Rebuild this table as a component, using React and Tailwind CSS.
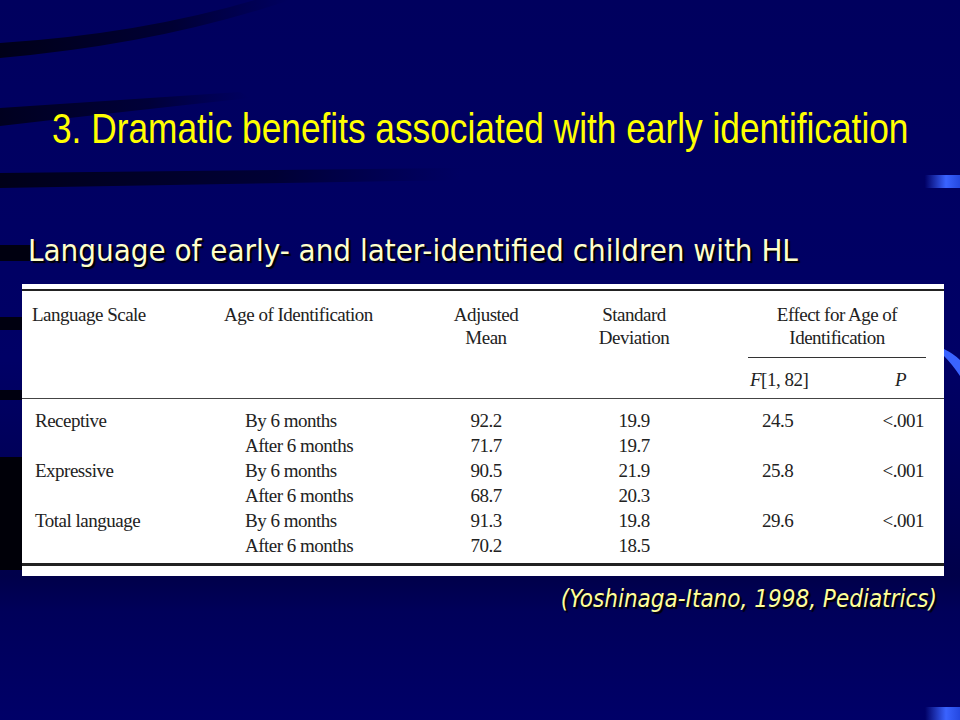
const serif = { fontFamily: '"Liberation Serif", "Times New Roman", serif' };

const rows = [
  ["Receptive", "By 6 months", "92.2", "19.9", "24.5", "<.001"],
  ["", "After 6 months", "71.7", "19.7", "", ""],
  ["Expressive", "By 6 months", "90.5", "21.9", "25.8", "<.001"],
  ["", "After 6 months", "68.7", "20.3", "", ""],
  ["Total language", "By 6 months", "91.3", "19.8", "29.6", "<.001"],
  ["", "After 6 months", "70.2", "18.5", "", ""],
];

function Backdrop() {
  return (
    <svg className="absolute inset-0" width="960" height="720" viewBox="0 0 960 720">
      <defs>
        <linearGradient id="bg" x1="0" y1="0" x2="0" y2="1">
          <stop offset="0" stopColor="#00005e" />
          <stop offset="0.5" stopColor="#000066" />
          <stop offset="0.8" stopColor="#00004a" />
          <stop offset="0.85" stopColor="#00005a" />
          <stop offset="1" stopColor="#000068" />
        </linearGradient>
        <linearGradient id="fadeR" x1="0" y1="0" x2="1" y2="0">
          <stop offset="0" stopColor="#000018" stopOpacity="1" />
          <stop offset="0.6" stopColor="#000022" stopOpacity="0.7" />
          <stop offset="1" stopColor="#000033" stopOpacity="0" />
        </linearGradient>
        <linearGradient id="glow" x1="0" y1="0" x2="1" y2="0">
          <stop offset="0" stopColor="#000066" />
          <stop offset="0.6" stopColor="#3a63ff" />
          <stop offset="1" stopColor="#2448e0" />
        </linearGradient>
      </defs>
      <rect width="960" height="720" fill="url(#bg)" />
      <path d="M0,43 Q140,34 255,0 L290,0 Q160,44 0,58 Z" fill="url(#fadeR)" />
      <path d="M0,108 Q120,100 240,92 L250,98 Q120,112 0,126 Z" fill="url(#fadeR)" opacity="0.9" />
      <path d="M0,173 L460,168 L460,180 L0,188 Z" fill="url(#fadeR)" />
      <rect x="0" y="245" width="30" height="16" fill="#000010" />
      <rect x="0" y="317" width="24" height="13" fill="#000010" />
      <rect x="0" y="390" width="24" height="10" fill="#000010" />
      <rect x="0" y="457" width="22" height="113" fill="#000008" />
      <rect x="925" y="175" width="35" height="13" fill="url(#glow)" />
      <path d="M944,349 Q954,354 960,360 L960,376 Q952,364 944,356 Z" fill="#3a63ff" />
      <rect x="925" y="707" width="35" height="13" fill="url(#glow)" />
    </svg>
  );
}

export default function App() {
  return (
    <div className="relative w-[960px] h-[720px] overflow-hidden bg-[#000066]">
      <Backdrop />

      <div className="relative flex flex-col">
        {/* TITLE */}
        <h1
          className="mt-[107px] self-center w-max text-[43px] leading-[43px] text-[#ffff00] scale-x-[0.82] origin-center whitespace-nowrap"
          style={{ fontFamily: '"Liberation Sans", Arial, sans-serif' }}
        >
          3. Dramatic benefits associated with early identification
        </h1>

        {/* SUBTITLE */}
        <p
          className="mt-[85px] ml-[28px] text-[31px] leading-[31px] text-[#ffffcc] whitespace-nowrap [text-shadow:2px_2px_1px_#000]"
          style={{ fontFamily: '"DejaVu Sans Condensed", "DejaVu Sans", sans-serif' }}
        >
          Language of early- and later-identified children with HL
        </p>

        {/* TABLE */}
        <div
          className="mt-[18px] ml-[22px] w-[922px] h-[292px] bg-white text-[19px] tracking-[-0.5px] text-[#222] pt-[5px]"
          style={serif}
        >
          <div className="border-t-2 border-[#222] pt-[12px]">
            <div className="flex leading-[23px]">
              <div className="w-[202px] pl-[10px]">Language Scale</div>
              <div className="w-[204px]">Age of Identification</div>
              <div className="w-[116px] text-center">Adjusted<br />Mean</div>
              <div className="w-[180px] text-center">Standard<br />Deviation</div>
              <div className="ml-[24px] w-[178px]">
                <div className="text-center pb-[8px] border-b border-[#333]">
                  Effect for Age of<br />Identification
                </div>
                <div className="flex justify-between pt-[10px] pl-[2px] pr-[20px]">
                  <span><i>F</i>[1, 82]</span>
                  <i>P</i>
                </div>
              </div>
            </div>
          </div>

          <div className="mt-[7px] border-t-[1.5px] border-[#444] pt-[9px] pb-[5px] border-b-[3px] border-b-[#222]">
            {rows.map((r, i) => (
              <div key={i} className="flex leading-[25px]">
                <div className="w-[202px] pl-[13px]">{r[0]}</div>
                <div className="w-[204px] pl-[21px]">{r[1]}</div>
                <div className="w-[116px] text-center">{r[2]}</div>
                <div className="w-[180px] text-center">{r[3]}</div>
                <div className="w-[88px] pl-[38px]">{r[4]}</div>
                <div className="w-[112px] text-right">{r[5]}</div>
              </div>
            ))}
          </div>
        </div>

        {/* SOURCE */}
        <p
          className="mt-[11px] mr-[23px] self-end text-[24px] leading-[24px] italic text-[#ffff99] whitespace-nowrap [text-shadow:2px_2px_1px_#000]"
          style={{ fontFamily: '"DejaVu Sans Condensed", "DejaVu Sans", sans-serif' }}
        >
          (Yoshinaga-Itano, 1998, Pediatrics)
        </p>
      </div>
    </div>
  );
}
